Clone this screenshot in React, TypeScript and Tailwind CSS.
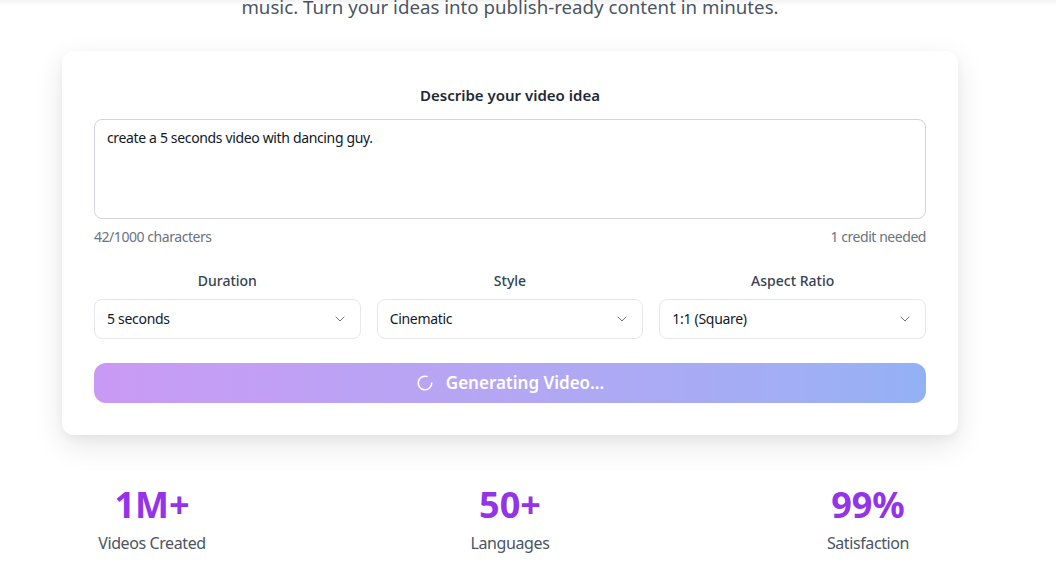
import React from "react";
import { ChevronDown, LoaderCircle } from "lucide-react";

function SelectBox({ label, value }: { label: string; value: string }) {
  return (
    <div className="flex flex-col">
      <div className="text-center text-sm leading-5 font-medium text-[#374151] mb-2">{label}</div>
      <div className="h-10 rounded-lg border border-[#e5e7eb] bg-white flex items-center justify-between pl-3 pr-3">
        <span className="text-sm tracking-[-0.3px] text-[#111827]">{value}</span>
        <ChevronDown size={16} strokeWidth={1.5} className="text-[#6b7280]" />
      </div>
    </div>
  );
}

function Stat({ value, label }: { value: string; label: string }) {
  return (
    <div className="w-[180px] flex flex-col items-center">
      <div className="text-4xl leading-10 font-bold text-[#9333ea]">{value}</div>
      <div className="mt-1.5 text-base leading-6 tracking-[-0.4px] text-[#4b5563]">{label}</div>
    </div>
  );
}

export default function App() {
  return (
    <div
      className="min-h-[586px] bg-white overflow-hidden relative"
      style={{ fontFamily: '"Noto Sans", "Open Sans", sans-serif' }}
    >
      <div className="fixed top-0 inset-x-0 h-[6px] bg-gradient-to-b from-black/[0.05] to-transparent pointer-events-none z-10" />
      <div className="w-[896px] ml-[62px]">
        <p className="-mt-[7px] text-center text-[18.7px] leading-7 text-[#4b5563]">
          music. Turn your ideas into publish-ready content in minutes.
        </p>
        <div className="mt-[30px] bg-white rounded-xl shadow-[0_10px_30px_rgba(0,0,0,0.10),0_4px_10px_rgba(0,0,0,0.04)] p-8">
          <div className="text-center text-[15px] leading-6 font-semibold text-[#1f2937] mb-3">
            Describe your video idea
          </div>
          <div className="h-[100px] rounded-lg border border-[#d1d5db] px-3 py-2 text-sm leading-5 tracking-[-0.35px] text-[#111827]">
            create a 5 seconds video with dancing guy.
          </div>
          <div className="mt-2 flex justify-between text-sm leading-5 tracking-[-0.45px] text-[#6b7280]">
            <span>42/1000 characters</span>
            <span>1 credit needed</span>
          </div>
          <div className="mt-6 grid grid-cols-3 gap-4">
            <SelectBox label="Duration" value="5 seconds" />
            <SelectBox label="Style" value="Cinematic" />
            <SelectBox label="Aspect Ratio" value="1:1 (Square)" />
          </div>
          <div className="mt-6 h-10 rounded-xl bg-gradient-to-r from-[#9333ea] to-[#2563eb] opacity-50 flex items-center justify-center text-white">
            <LoaderCircle size={18} strokeWidth={2} className="mr-3" />
            <span className="text-[17px] font-semibold">Generating Video...</span>
          </div>
        </div>
        <div className="mt-[50px] flex justify-between">
          <Stat value="1M+" label="Videos Created" />
          <Stat value="50+" label="Languages" />
          <Stat value="99%" label="Satisfaction" />
        </div>
      </div>
    </div>
  );
}
